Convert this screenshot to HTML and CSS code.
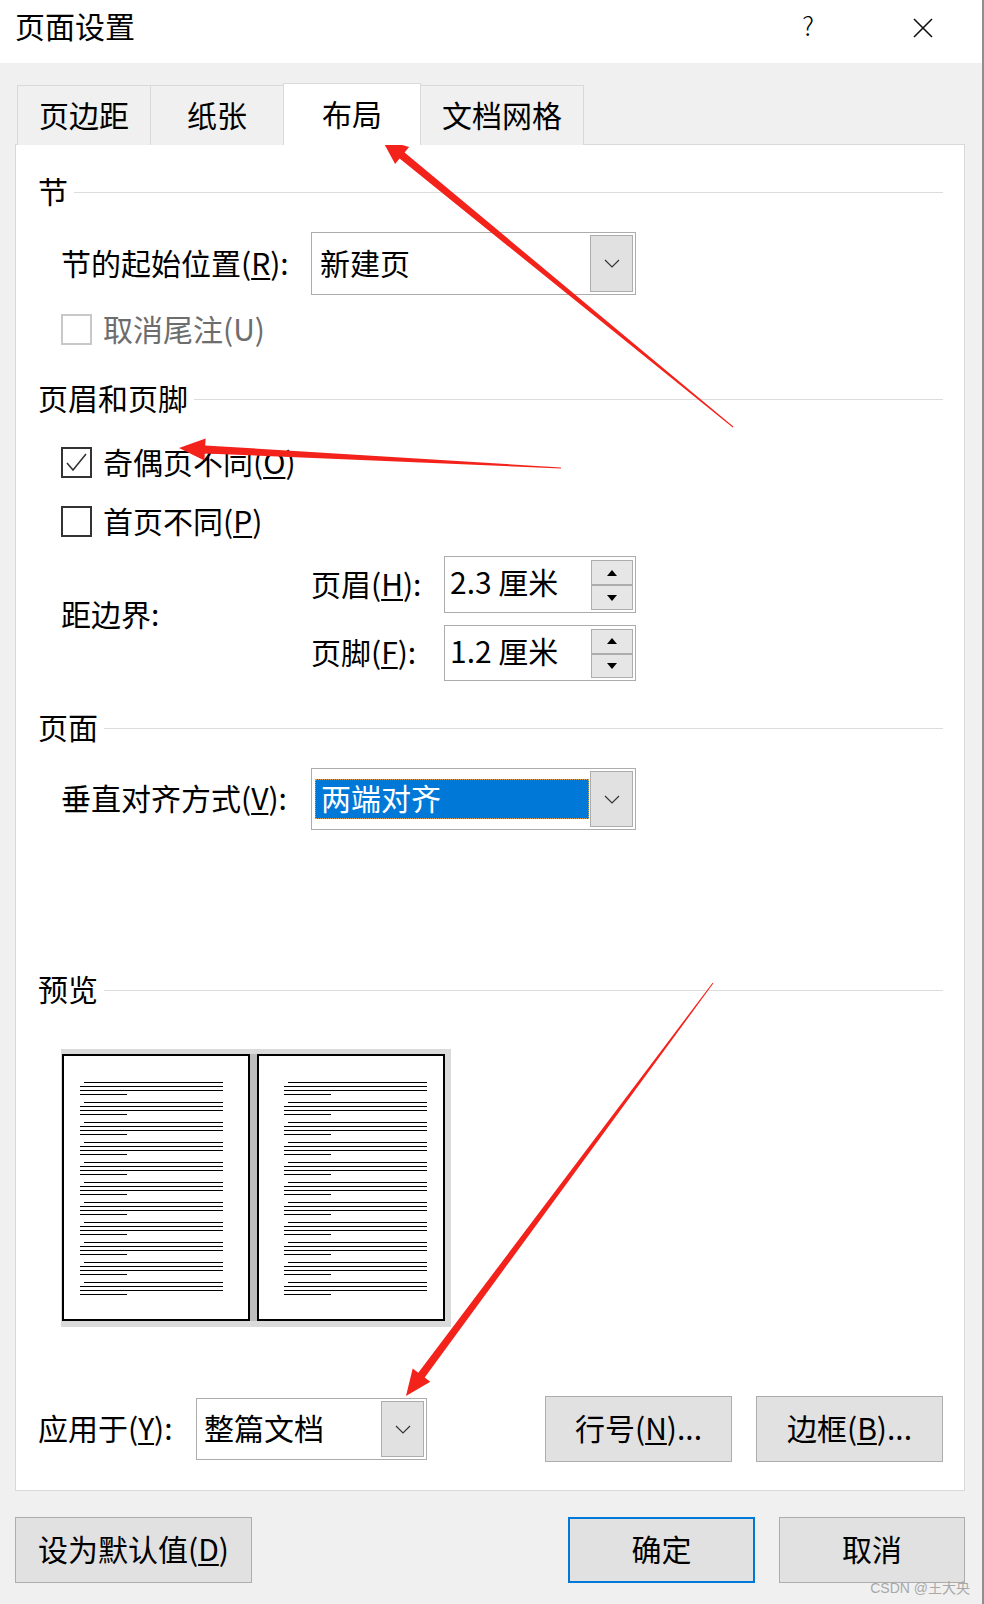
FILE: index.html
```html
<!DOCTYPE html>
<html lang="zh-CN">
<head>
<meta charset="utf-8">
<title>页面设置</title>
<link rel="stylesheet" href="styles.css">
</head>
<body>
<div class="window">
  <div class="titlebar">
    <div class="title">页面设置</div>
    <div class="help">?</div>
    <div class="close">
      <svg width="20" height="20" viewBox="0 0 20 20"><path d="M1 1L19 19M19 1L1 19" stroke="#111" stroke-width="1.6" fill="none"/></svg>
    </div>
  </div>

  <div class="tabs">
    <div class="tab">页边距</div>
    <div class="tab">纸张</div>
    <div class="tab active">布局</div>
    <div class="tab">文档网格</div>
  </div>

  <div class="panel">
    <div class="sec sec-first"><span>节</span></div>
    <div class="row field row-start">
      <div class="lbl">节的起始位置(<u>R</u>):</div>
      <div class="select wide">
        <div class="sel-text">新建页</div>
        <div class="dd"><svg width="16" height="9" viewBox="0 0 16 9"><path d="M1 1L8 8L15 1" stroke="#333" stroke-width="1.2" fill="none"/></svg></div>
      </div>
    </div>
    <div class="row check disabled row-endnote">
      <span class="box"></span><span class="ctext">取消尾注(U)</span>
    </div>

    <div class="sec sec-hf"><span>页眉和页脚</span></div>
    <div class="row check row-odd">
      <span class="box"><svg width="27" height="27" viewBox="0 0 27 27"><path d="M4 14L10 21L23 5" stroke="#333" stroke-width="1.6" fill="none"/></svg></span><span class="ctext">奇偶页不同(<u>O</u>)</span>
    </div>
    <div class="row check row-first">
      <span class="box"></span><span class="ctext">首页不同(<u>P</u>)</span>
    </div>
    <div class="row margins">
      <div class="lbl lbl-margins">距边界:</div>
      <div class="spins">
        <div class="slbl">页眉(<u>H</u>):</div>
        <div class="spin spin-h">
          <div class="spin-text">2.3 厘米</div>
          <div class="spin-btns"><div class="sb"><i class="tri up"></i></div><div class="sb"><i class="tri down"></i></div></div>
        </div>
        <div class="slbl">页脚(<u>F</u>):</div>
        <div class="spin spin-f">
          <div class="spin-text">1.2 厘米</div>
          <div class="spin-btns"><div class="sb"><i class="tri up"></i></div><div class="sb"><i class="tri down"></i></div></div>
        </div>
      </div>
    </div>

    <div class="sec sec-page"><span>页面</span></div>
    <div class="row field row-valign">
      <div class="lbl">垂直对齐方式(<u>V</u>):</div>
      <div class="select wide">
        <div class="sel-hl">两端对齐</div>
        <div class="dd"><svg width="16" height="9" viewBox="0 0 16 9"><path d="M1 1L8 8L15 1" stroke="#333" stroke-width="1.2" fill="none"/></svg></div>
      </div>
    </div>

    <div class="sec sec-preview"><span>预览</span></div>
    <div class="preview">
      <div class="page odd">
        <div class="para"><i class="ln ind"></i><i class="ln"></i><i class="ln"></i><i class="ln short"></i></div>
        <div class="para"><i class="ln ind"></i><i class="ln"></i><i class="ln"></i><i class="ln short"></i></div>
        <div class="para"><i class="ln ind"></i><i class="ln"></i><i class="ln"></i><i class="ln short"></i></div>
        <div class="para"><i class="ln ind"></i><i class="ln"></i><i class="ln"></i><i class="ln short"></i></div>
        <div class="para"><i class="ln ind"></i><i class="ln"></i><i class="ln"></i><i class="ln short"></i></div>
        <div class="para"><i class="ln ind"></i><i class="ln"></i><i class="ln"></i><i class="ln short"></i></div>
        <div class="para"><i class="ln ind"></i><i class="ln"></i><i class="ln"></i><i class="ln short"></i></div>
        <div class="para"><i class="ln ind"></i><i class="ln"></i><i class="ln"></i><i class="ln short"></i></div>
        <div class="para"><i class="ln ind"></i><i class="ln"></i><i class="ln"></i><i class="ln short"></i></div>
        <div class="para"><i class="ln ind"></i><i class="ln"></i><i class="ln"></i><i class="ln short"></i></div>
        <div class="para"><i class="ln ind"></i><i class="ln"></i><i class="ln"></i><i class="ln short"></i></div>
      </div>
      <div class="gutter"></div>
      <div class="page even">
        <div class="para"><i class="ln ind"></i><i class="ln"></i><i class="ln"></i><i class="ln short"></i></div>
        <div class="para"><i class="ln ind"></i><i class="ln"></i><i class="ln"></i><i class="ln short"></i></div>
        <div class="para"><i class="ln ind"></i><i class="ln"></i><i class="ln"></i><i class="ln short"></i></div>
        <div class="para"><i class="ln ind"></i><i class="ln"></i><i class="ln"></i><i class="ln short"></i></div>
        <div class="para"><i class="ln ind"></i><i class="ln"></i><i class="ln"></i><i class="ln short"></i></div>
        <div class="para"><i class="ln ind"></i><i class="ln"></i><i class="ln"></i><i class="ln short"></i></div>
        <div class="para"><i class="ln ind"></i><i class="ln"></i><i class="ln"></i><i class="ln short"></i></div>
        <div class="para"><i class="ln ind"></i><i class="ln"></i><i class="ln"></i><i class="ln short"></i></div>
        <div class="para"><i class="ln ind"></i><i class="ln"></i><i class="ln"></i><i class="ln short"></i></div>
        <div class="para"><i class="ln ind"></i><i class="ln"></i><i class="ln"></i><i class="ln short"></i></div>
        <div class="para"><i class="ln ind"></i><i class="ln"></i><i class="ln"></i><i class="ln short"></i></div>
      </div>
    </div>

    <div class="apply">
      <div class="lbl">应用于(<u>Y</u>):</div>
      <div class="select narrow">
        <div class="sel-text">整篇文档</div>
        <div class="dd"><svg width="16" height="9" viewBox="0 0 16 9"><path d="M1 1L8 8L15 1" stroke="#333" stroke-width="1.2" fill="none"/></svg></div>
      </div>
      <div class="btn line-no">行号(<u>N</u>)...</div>
      <div class="btn borders">边框(<u>B</u>)...</div>
    </div>
  </div>

  <div class="footer">
    <div class="btn set-default">设为默认值(<u>D</u>)</div>
    <div class="btn ok">确定</div>
    <div class="btn cancel">取消</div>
  </div>

  <div class="wm">CSDN @王大央</div>

  <svg class="annot" width="984" height="1604" viewBox="0 0 984 1604">
    <polygon points="733.3,426.6 404.6,152.4 409.1,147.0 381.6,139 395.1,164.0 399.6,158.6 732.7,427.4" fill="#f3231c"/>
    <polygon points="561,467.5 205.2,445.4 205.6,438.4 179,448 204.4,460.4 204.8,453.4 561,468.5" fill="#f3231c"/>
    <polygon points="712.6,982.7 418.3,1372.7 412.7,1368.6 406,1396 430.3,1381.7 424.7,1377.5 713.4,983.3" fill="#f3231c"/>
  </svg>
</div>
</body>
</html>
```

FILE: styles.css
```css
* { box-sizing: border-box; }
html, body { margin: 0; padding: 0; }
body {
  width: 984px;
  height: 1604px;
  overflow: hidden;
  background: #f0f0f0;
  color: #000;
  font-family: "Noto Sans CJK SC", "Microsoft YaHei", sans-serif;
  font-size: 30px;
}
u { text-decoration-thickness: 1.5px; text-underline-offset: 3px; }
i { font-style: normal; }

.window {
  position: relative;
  width: 984px;
  height: 1604px;
  background: #f0f0f0;
  border-right: 2px solid #8e8e8e;
}

/* title bar */
.titlebar {
  height: 63px;
  background: #fff;
  display: flex;
  align-items: flex-start;
  padding: 10px 0 0 15px;
}
.title { flex: 1; line-height: 30px; }
.help {
  width: 20px;
  margin-right: 95px;
  text-align: center;
  font-size: 26px;
  line-height: 30px;
  font-weight: 300;
}
.close { width: 20px; height: 20px; margin: 8px 49px 0 0; }
.close svg { display: block; }

/* tabs */
.tabs {
  display: flex;
  align-items: flex-end;
  height: 82px;
  margin-bottom: -1px;
  padding-left: 17px;
}
.tab {
  height: 60px;
  min-width: 134px;
  padding: 0 21px 4px;
  display: flex;
  align-items: center;
  justify-content: center;
  line-height: 30px;
  white-space: nowrap;
  background: #f0f0f0;
  border: 1px solid #d9d9d9;
  border-bottom: none;
}
.tab + .tab { margin-left: -1px; }
.tab:first-child { min-width: 132px; }
.tab.active {
  position: relative;
  z-index: 1;
  height: 62px;
  min-width: 138px;
  background: #fff;
}

/* panel */
.panel {
  margin: 0 17px 0 15px;
  background: #fff;
  border: 1px solid #d9d9d9;
  padding: 32px 21px 28px 22px;
}
.sec {
  display: flex;
  align-items: center;
  height: 30px;
  line-height: 30px;
  white-space: nowrap;
}
.sec span { padding-bottom: 4px; }
.sec::after {
  content: "";
  flex: 1;
  margin-left: 6px;
  border-top: 1px solid #dcdcdc;
}
.sec-hf { margin-top: 39px; }
.sec-page { margin-top: 32px; }
.sec-preview { margin-top: 145px; }

.row { margin-left: 23px; display: flex; align-items: center; }
.lbl { line-height: 30px; padding-bottom: 4px; white-space: nowrap; }
.field .lbl { width: 250px; }
.row-start { margin-top: 25px; }
.row-valign { margin-top: 25px; }

/* select */
.select {
  display: flex;
  background: #fff;
  border: 1px solid #acacac;
  padding: 2px;
}
.select.wide { width: 325px; height: 63px; }
.row-valign .select.wide { height: 62px; }
.sel-text {
  flex: 1;
  display: flex;
  align-items: center;
  padding: 0 0 4px 6px;
  line-height: 30px;
  white-space: nowrap;
}
.sel-hl {
  flex: 1;
  margin: 8px 1px 8px 1px;
  padding: 0 0 4px 6px;
  display: flex;
  align-items: center;
  background: #0078d7;
  color: #fff;
  outline: 1px dotted #d9a25a;
  outline-offset: -1px;
  line-height: 30px;
  white-space: nowrap;
}
.dd {
  width: 43px;
  background: #e1e1e1;
  border: 1px solid #adadad;
  display: flex;
  align-items: center;
  justify-content: center;
}
.dd svg { display: block; }

/* checkboxes */
.check { height: 31px; }
.check .box {
  width: 31px;
  height: 31px;
  border: 2px solid #333;
  background: #fff;
  display: flex;
  align-items: center;
  justify-content: center;
}
.check .box svg { display: block; }
.ctext { margin-left: 11px; line-height: 30px; padding-bottom: 4px; white-space: nowrap; }
.check.disabled .box { border-color: #c8c8c8; }
.check.disabled .ctext { color: #6d6d6d; }
.row-endnote { margin-top: 19px; }
.row-odd { margin-top: 33px; }
.row-first { margin-top: 28px; }

/* margins spin boxes */
.margins { margin-top: 19px; }
.lbl-margins { width: 250px; margin-top: -8px; }
.spins {
  display: grid;
  grid-template-columns: 133px 192px;
  grid-template-rows: 57px 56px;
  row-gap: 12px;
  align-items: center;
}
.slbl { line-height: 30px; padding-bottom: 4px; white-space: nowrap; }
.spin {
  display: flex;
  height: 57px;
  background: #fff;
  border: 1px solid #acacac;
}
.spin-f { height: 56px; }
.spin-text {
  flex: 1;
  padding: 0 0 7px 5px;
  display: flex;
  align-items: center;
  line-height: 30px;
  white-space: nowrap;
}
.spin-btns {
  width: 42px;
  margin: 3px 2px 2px 0;
  display: flex;
  flex-direction: column;
}
.sb {
  flex: 1;
  background: #e6e6e6;
  border: 1px solid #adadad;
  display: flex;
  align-items: center;
  justify-content: center;
}
.tri { display: block; width: 0; height: 0; border-left: 5px solid transparent; border-right: 5px solid transparent; }
.tri.up { border-bottom: 6px solid #000; }
.tri.down { border-top: 6px solid #000; }

/* preview */
.preview {
  margin: 44px 0 0 23px;
  display: flex;
  width: max-content;
  background: #dadada;
  padding: 5px 6px 6px 1px;
}
.gutter { width: 7px; background: #bdbdbd; }
.page {
  width: 188px;
  height: 267px;
  background: #fff;
  border: 2px solid #000;
  padding-top: 26px;
  display: flex;
  flex-direction: column;
  gap: 7px;
}
.page.odd { padding-left: 16px; }
.page.even { padding-left: 25px; }
.para { display: flex; flex-direction: column; gap: 3px; }
.ln { display: block; height: 1px; width: 143px; background: #000; }
.ln.ind { margin-left: 4px; width: 139px; }
.ln.short { width: 47px; }

/* apply row */
.apply {
  margin-top: 69px;
  height: 66px;
  display: flex;
  align-items: center;
}
.apply .lbl { width: 158px; }
.select.narrow { width: 231px; height: 62px; }
.select.narrow .sel-text { padding-left: 5px; }

/* buttons */
.btn {
  height: 66px;
  background: #e1e1e1;
  border: 1px solid #adadad;
  display: flex;
  align-items: center;
  justify-content: center;
  line-height: 30px;
  padding-bottom: 4px;
  white-space: nowrap;
}
.line-no { width: 187px; margin-left: auto; }
.borders { width: 187px; margin-left: 24px; }

.footer {
  display: flex;
  margin: 26px 17px 0 15px;
}
.set-default { width: 237px; }
.ok { width: 187px; margin-left: auto; border: 2px solid #0078d7; }
.cancel { width: 186px; margin-left: 24px; }

/* overlays */
.wm {
  position: absolute;
  right: 12px;
  top: 1578px;
  font-size: 14px;
  line-height: 20px;
  color: #a8a8a8;
  font-family: "Liberation Sans", "Noto Sans CJK SC", sans-serif;
  white-space: nowrap;
}
.annot {
  position: absolute;
  left: 0;
  top: 0;
  pointer-events: none;
}
```
